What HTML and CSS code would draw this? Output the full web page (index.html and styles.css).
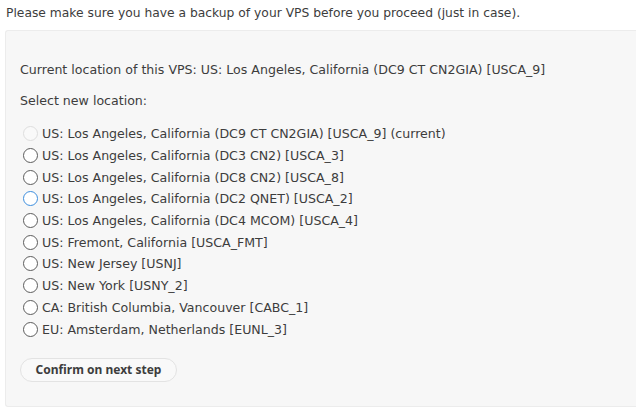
FILE: index.html
```html
<!DOCTYPE html>
<html>
<head>
<meta charset="utf-8">
<link rel="stylesheet" href="styles.css">
</head>
<body>
<p class="note">Please make sure you have a backup of your VPS before you proceed (just in case).</p>
<div class="panel">
  <p class="current">Current location of this VPS: US: Los Angeles, California (DC9 CT CN2GIA) [USCA_9]</p>
  <p class="select">Select new location:</p>
  <div class="options">
    <label class="opt disabled"><span class="radio"></span>US: Los Angeles, California (DC9 CT CN2GIA) [USCA_9] (current)</label>
    <label class="opt"><span class="radio"></span>US: Los Angeles, California (DC3 CN2) [USCA_3]</label>
    <label class="opt"><span class="radio"></span>US: Los Angeles, California (DC8 CN2) [USCA_8]</label>
    <label class="opt"><span class="radio hover"></span>US: Los Angeles, California (DC2 QNET) [USCA_2]</label>
    <label class="opt"><span class="radio"></span>US: Los Angeles, California (DC4 MCOM) [USCA_4]</label>
    <label class="opt"><span class="radio"></span>US: Fremont, California [USCA_FMT]</label>
    <label class="opt"><span class="radio"></span>US: New Jersey [USNJ]</label>
    <label class="opt"><span class="radio"></span>US: New York [USNY_2]</label>
    <label class="opt"><span class="radio"></span>CA: British Columbia, Vancouver [CABC_1]</label>
    <label class="opt"><span class="radio"></span>EU: Amsterdam, Netherlands [EUNL_3]</label>
  </div>
  <button class="btn">Confirm on next step</button>
</div>
</body>
</html>
```
FILE: styles.css
```css
html, body { margin: 0; padding: 0; background: #fff; }
body {
  font-family: "DejaVu Sans", Verdana, sans-serif;
  font-size: 12.6px;
  color: #3d3d3d;
  padding: 0 0 0 5px;
}
.note {
  margin: 0;
  padding: 4px 0 0 1px;
  height: 26px;
  line-height: 18px;
  font-size: 12.3px;
}
.panel {
  background: #f7f7f7;
  border: 1px solid #ececec;
  border-right: none;
  border-radius: 3px 0 0 3px;
  padding: 29px 0 24px 14px;
  height: 322px;
}
.current { margin: 0; line-height: 20px; }
.select { margin: 11px 0 0; line-height: 20px; }
.options { margin-top: 12px; display: flex; flex-direction: column; }
.opt { display: flex; align-items: center; height: 21.7px; }
.radio {
  width: 15px; height: 15px;
  box-sizing: border-box;
  border: 1px solid #5c5c5c;
  border-radius: 50%;
  background: #fff;
  margin: 0 4px 0 3px;
  flex: none;
}
.radio.hover { border-color: #3d8ede; }
.opt.disabled .radio { border-color: #dedede; background: #f9f9f9; }
.btn {
  display: block;
  margin-top: 18px;
  font-family: "Noto Sans", "Open Sans", sans-serif;
  font-size: 12px;
  font-weight: bold;
  color: #3d3d3d;
  background: #f9f9f9;
  border: 1px solid #e3e3e3;
  border-radius: 12px;
  height: 24px;
  width: 157px;
  padding: 0;
}
```
